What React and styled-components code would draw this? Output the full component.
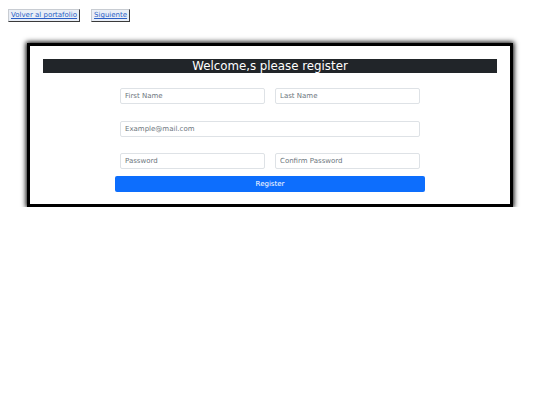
import React from "react";
import styled, { createGlobalStyle } from "styled-components";

const GlobalStyle = createGlobalStyle`
  body {
    margin: 8px;
    background: #ffffff;
    font-family: "DejaVu Sans", sans-serif;
    color: #212529;
  }
`;

const NavBar = styled.nav`
  display: flex;
  gap: 11px;
  padding-top: 1px;
`;

const NavButton = styled.button`
  box-sizing: border-box;
  height: 13px;
  font-family: "DejaVu Sans", sans-serif;
  font-size: 7px;
  line-height: 9px;
  padding: 1px 2px;
  background: #e9eef6;
  border: 1px solid;
  border-color: #c8ccd2 #3a3a3a #3a3a3a #c8ccd2;
  border-radius: 0;

  a {
    color: #2a5fc6;
    text-decoration: underline;
  }
`;

const Card = styled.section`
  margin: 21px 19px 0 19px;
  border: 3px solid #000;
  box-shadow: 0 0 5px 1px #000;
  background: #fff;
  padding: 13px 13px 12px 13px;
`;

const Title = styled.h1`
  margin: 0;
  background: #212529;
  color: #fff;
  font-weight: 400;
  font-size: 11.8px;
  line-height: 15px;
  height: 14px;
  text-align: center;
`;

const Form = styled.form`
  width: 310px;
  margin: 15px auto 0 auto;
  display: flex;
  flex-direction: column;
  align-items: center;
`;

const Row = styled.div`
  width: 300px;
  display: flex;
  gap: 10px;
  margin-bottom: ${(p) => p.$gap}px;
`;

const Input = styled.input`
  flex: 1;
  min-width: 0;
  box-sizing: border-box;
  height: 16px;
  padding: 0 4px;
  border: 1px solid #dee2e6;
  border-radius: 2px;
  font-family: "DejaVu Sans", sans-serif;
  font-size: 7px;
  color: #212529;
  background: #fff;

  &::placeholder {
    color: #6c757d;
  }
`;

const Submit = styled.button`
  width: 310px;
  height: 16px;
  border: none;
  border-radius: 2px;
  background: #0d6efd;
  color: #fff;
  font-family: "DejaVu Sans", sans-serif;
  font-size: 7px;
  padding: 0;
`;

export default function App() {
  return (
    <>
      <GlobalStyle />
      <NavBar>
        <NavButton>
          <a href="#">Volver al portafolio</a>
        </NavButton>
        <NavButton>
          <a href="#">Siguiente</a>
        </NavButton>
      </NavBar>
      <Card>
        <Title>Welcome,s please register</Title>
        <Form onSubmit={(e) => e.preventDefault()}>
          <Row $gap={17}>
            <Input placeholder="First Name" />
            <Input placeholder="Last Name" />
          </Row>
          <Row $gap={16}>
            <Input placeholder="Example@mail.com" />
          </Row>
          <Row $gap={7}>
            <Input type="password" placeholder="Password" />
            <Input type="password" placeholder="Confirm Password" />
          </Row>
          <Submit type="submit">Register</Submit>
        </Form>
      </Card>
    </>
  );
}
